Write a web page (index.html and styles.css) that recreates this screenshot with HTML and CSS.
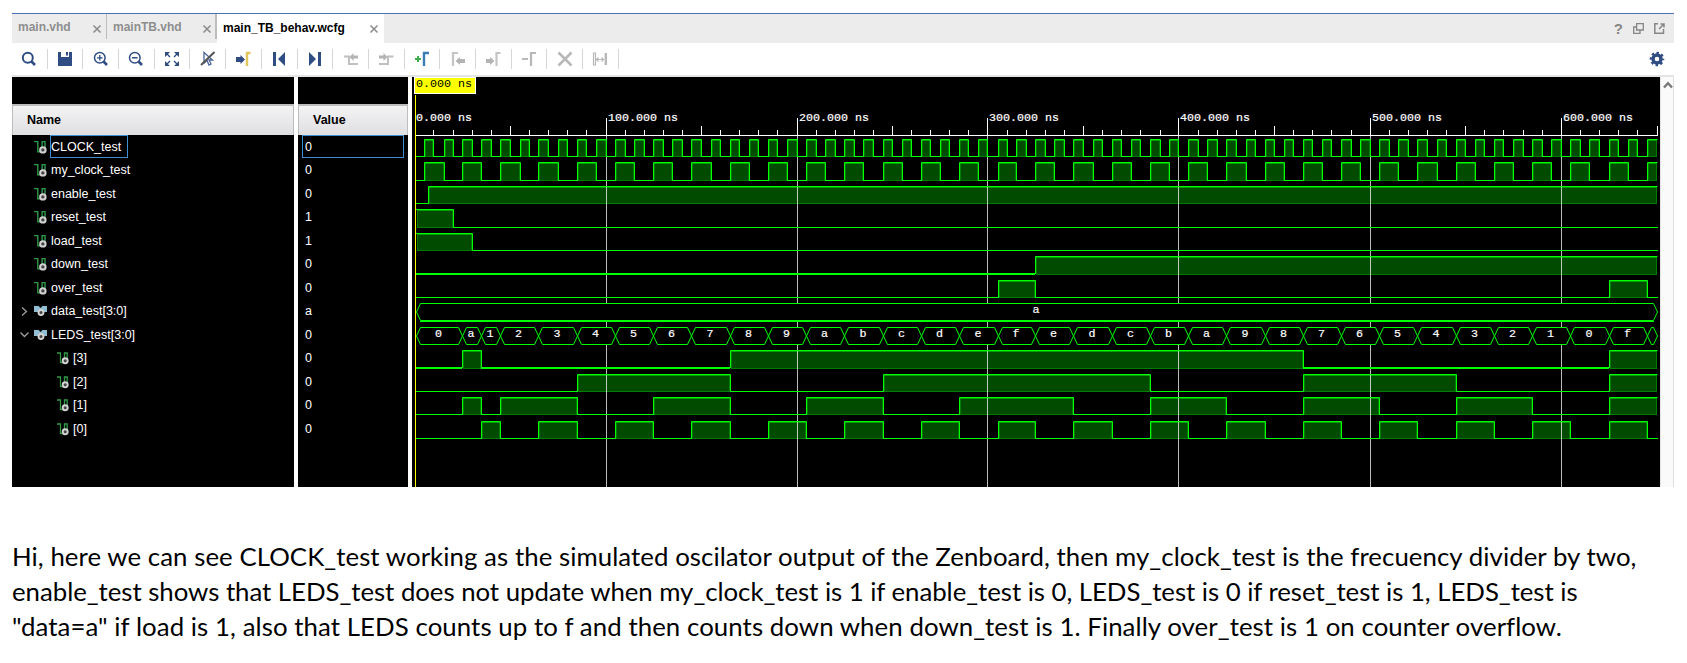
FILE: index.html
```html
<!DOCTYPE html>
<html lang="en">
<head>
<meta charset="utf-8">
<title>main_TB_behav.wcfg</title>
<link rel="stylesheet" href="styles.css">
</head>
<body>
<svg class="defs" width="0" height="0">
  <symbol id="sig" viewBox="0 0 12 13">
    <path d="M0 1.5H3.5V11H6.5M7.5 8V1.500H10.200V7" fill="none" stroke="#2f9a48" stroke-width="1.300"/>
    <circle cx="8.200" cy="9.200" r="2.500" fill="#444" stroke="#d2d2d2" stroke-width="1.900"/>
  </symbol>
  <symbol id="bus" viewBox="0 0 13 12">
    <path d="M0 1H4.500L6.500 3L8.500 1H13V7H0Z" fill="#8fbdd3"/>
    <circle cx="7" cy="7.500" r="2.500" fill="#444" stroke="#d2d2d2" stroke-width="1.900"/>
  </symbol>
  <symbol id="close" viewBox="0 0 10 10"><path d="M1.500 1.500L8.500 8.500M8.500 1.500L1.500 8.500" stroke="#8a8a8a" stroke-width="1.500"/></symbol>
</svg>
<main class="window">
  <header class="tabs">
    <div class="tab t1"><span>main.vhd</span><svg class="x"><use href="#close"/></svg></div>
    <div class="tab t2"><span>mainTB.vhd</span><svg class="x"><use href="#close"/></svg></div>
    <div class="tab t3"><span>main_TB_behav.wcfg</span><svg class="x"><use href="#close"/></svg></div>
    <div class="winctl">
      <span class="help">?</span>
      <svg width="11" height="11" viewBox="0 0 11 11" fill="none" stroke="#868686" stroke-width="1.300"><path d="M3.600 .7H10.300V7H3.600ZM3.600 4H.7V10.300H7V7"/></svg>
      <svg width="11" height="11" viewBox="0 0 11 11" fill="none" stroke="#868686" stroke-width="1.500"><path d="M4 .8H.8V10.200H9.500V6M5 6L9.500 1.500M6.500 1H10V4.500"/></svg>
    </div>
  </header>
  <nav class="toolbar">
    <div class="tool"><svg viewBox="0 0 16 16"><circle cx="6.800" cy="6.800" r="5" fill="none" stroke="#2f4d82" stroke-width="2"/><path d="M10.500 10.500L14 14" stroke="#2f4d82" stroke-width="2.600"/></svg></div>
    <div class="tool"><svg viewBox="0 0 16 16"><path d="M1 1H4V6H12V1H15V15H1ZM9 1H11V4.500H9Z" fill="#2f4d82"/></svg></div>
    <div class="tool"><svg viewBox="0 0 16 16"><circle cx="6.800" cy="6.800" r="5.300" fill="none" stroke="#2f4d82" stroke-width="1.500"/><path d="M4 6.800H9.600M6.800 4V9.600" stroke="#2f4d82" stroke-width="1.300"/><path d="M10.500 10.500L14 14" stroke="#2f4d82" stroke-width="2.600"/></svg></div>
    <div class="tool"><svg viewBox="0 0 16 16"><circle cx="6.800" cy="6.800" r="5.300" fill="none" stroke="#2f4d82" stroke-width="1.500"/><path d="M4 6.800H9.600" stroke="#2f4d82" stroke-width="1.500"/><path d="M10.500 10.500L14 14" stroke="#2f4d82" stroke-width="2.600"/></svg></div>
    <div class="tool"><svg viewBox="0 0 16 16"><path d="M1 1H6L1 6ZM15 1H10L15 6ZM1 15H6L1 10ZM15 15H10L15 10Z" fill="#2f4d82"/><path d="M3 3L6 6M13 3L10 6M3 13L6 10M13 13L10 10" stroke="#2f4d82" stroke-width="1.400"/></svg></div>
    <div class="tool"><svg viewBox="0 0 16 16"><path d="M4 1.500V12L7 9.500L9 14L11 13L9 9H12.500Z" fill="none" stroke="#4a669a" stroke-width="1.300"/><path d="M1 14L14.500 1" stroke="#555" stroke-width="2"/></svg></div>
    <div class="tool"><svg viewBox="0 0 16 16"><path d="M1 6H5.500V4L10 8.500L5.500 13V11H1Z" fill="#2f4d82"/><path d="M15.500 2H12V15" fill="none" stroke="#e2c65c" stroke-width="2.400"/></svg></div>
    <div class="tool"><svg viewBox="0 0 16 16"><path d="M2 1H5V15H2ZM14 1V15L7 8Z" fill="#2f4d82"/></svg></div>
    <div class="tool"><svg viewBox="0 0 16 16"><path d="M11 1H14V15H11ZM2 1V15L9 8Z" fill="#2f4d82"/></svg></div>
    <div class="tool"><svg viewBox="0 0 16 16"><path d="M1 5.500H6V13H15" fill="none" stroke="#c0c0c0" stroke-width="2"/><path d="M6.500 6L10.500 2V4.500H15V7.500H10.500V10Z" fill="#b4b4b4"/></svg></div>
    <div class="tool"><svg viewBox="0 0 16 16"><path d="M1 13H10V5.500H15.500" fill="none" stroke="#c0c0c0" stroke-width="2"/><path d="M9.500 6L5.500 2V4.500H1V7.500H5.500V10Z" fill="#b4b4b4"/></svg></div>
    <div class="tool"><svg viewBox="0 0 16 16"><path d="M1 8H7M4 5V11" stroke="#3dae49" stroke-width="2"/><path d="M15 2H10V15" fill="none" stroke="#3a7cb4" stroke-width="2.400"/></svg></div>
    <div class="tool"><svg viewBox="0 0 16 16"><path d="M8 2H3V15" fill="none" stroke="#c4c4c4" stroke-width="2.200"/><path d="M5.500 10L10 6V8H15V12H10V14Z" fill="#b4b4b4"/></svg></div>
    <div class="tool"><svg viewBox="0 0 16 16"><path d="M15.500 2H11.500V15" fill="none" stroke="#c4c4c4" stroke-width="2.200"/><path d="M9.500 10L5 6V8H1V12H5V14Z" fill="#b4b4b4"/></svg></div>
    <div class="tool"><svg viewBox="0 0 16 16"><path d="M1 8H7M15 2H10V15" fill="none" stroke="#b8b8b8" stroke-width="2.200"/></svg></div>
    <div class="tool"><svg viewBox="0 0 16 16"><path d="M1.500 1.500L14.500 14.500M14.500 1.500L1.500 14.500" stroke="#b8b8b8" stroke-width="2.600"/></svg></div>
    <div class="tool"><svg viewBox="0 0 16 16"><path d="M1.500 2V14H3.500V2ZM4 8.500H12M6.500 6.500L4.500 8.500L6.500 10.500M9.500 6.500L11.500 8.500L9.500 10.500" fill="none" stroke="#b8b8b8" stroke-width="1.200"/><path d="M13.800 2V14" stroke="#b8b8b8" stroke-width="2.400"/></svg></div>
    <svg class="gear" viewBox="0 0 16 16"><circle cx="8" cy="8" r="4" fill="none" stroke="#2f4d82" stroke-width="3.400"/><circle cx="8" cy="8" r="6.200" fill="none" stroke="#2f4d82" stroke-width="2.200" stroke-dasharray="2.430 2.430" stroke-dashoffset="1.215"/></svg>
  </nav>
  <section class="viewer">
    <div class="col names">
      <div class="gap"></div>
      <div class="head">Name</div>
      <div class="row"><svg class="ic"><use href="#sig"/></svg><span class="sel">CLOCK_test</span></div>
      <div class="row"><svg class="ic"><use href="#sig"/></svg><span>my_clock_test</span></div>
      <div class="row"><svg class="ic"><use href="#sig"/></svg><span>enable_test</span></div>
      <div class="row"><svg class="ic"><use href="#sig"/></svg><span>reset_test</span></div>
      <div class="row"><svg class="ic"><use href="#sig"/></svg><span>load_test</span></div>
      <div class="row"><svg class="ic"><use href="#sig"/></svg><span>down_test</span></div>
      <div class="row"><svg class="ic"><use href="#sig"/></svg><span>over_test</span></div>
      <div class="row group"><svg class="arrow" viewBox="0 0 9 9"><path d="M2 .5L6.500 4.500L2 8.500"/></svg><svg class="ic"><use href="#bus"/></svg><span>data_test[3:0]</span></div>
      <div class="row group"><svg class="arrow" viewBox="0 0 9 9"><path d="M.5 2.500L4.500 6.500L8.500 2.500"/></svg><svg class="ic"><use href="#bus"/></svg><span>LEDS_test[3:0]</span></div>
      <div class="row bit"><svg class="ic"><use href="#sig"/></svg><span>[3]</span></div>
      <div class="row bit"><svg class="ic"><use href="#sig"/></svg><span>[2]</span></div>
      <div class="row bit"><svg class="ic"><use href="#sig"/></svg><span>[1]</span></div>
      <div class="row bit"><svg class="ic"><use href="#sig"/></svg><span>[0]</span></div>
    </div>
    <div class="col values">
      <div class="gap"></div>
      <div class="head">Value</div>
      <div class="row"><span class="sel">0</span></div>
      <div class="row"><span>0</span></div>
      <div class="row"><span>0</span></div>
      <div class="row"><span>1</span></div>
      <div class="row"><span>1</span></div>
      <div class="row"><span>0</span></div>
      <div class="row"><span>0</span></div>
      <div class="row"><span>a</span></div>
      <div class="row"><span>0</span></div>
      <div class="row"><span>0</span></div>
      <div class="row"><span>0</span></div>
      <div class="row"><span>0</span></div>
      <div class="row"><span>0</span></div>
    </div>
    <svg class="wave" id="wave" width="1248" height="410" viewBox="412 77 1248 410"></svg>
    <div class="scroll"><svg width="10" height="8" viewBox="0 0 10 8"><path d="M1 6.500L5 2.200L9 6.500" fill="none" stroke="#777" stroke-width="2.400"/></svg></div>
  </section>
</main>
<p class="note"><span class="l1">Hi, here we can see CLOCK_test working as the simulated oscilator output of the Zenboard, then my_clock_test is the frecuency divider by two,</span><br><span class="l2">enable_test shows that LEDS_test does not update when my_clock_test is 1 if enable_test is 0, LEDS_test is 0 if reset_test is 1, LEDS_test is</span><br><span class="l3">"data=a" if load is 1, also that LEDS counts up to f and then counts down when down_test is 1. Finally over_test is 1 on counter overflow.</span></p>
<script src="wave.js"></script>
</body>
</html>
```
FILE: styles.css
```css
* { box-sizing: border-box; }
body { margin: 0; background: #fff; font-family: "Liberation Sans", Arial, sans-serif; font-size: 12.500px; overflow: hidden; }
.defs { display: block; height: 0; }
.window { width: 1662px; margin: 13px 0 0 12px; }
.tabs { display: flex; height: 30px; border-top: 1px solid #4a72b5; background: #ececec; font-weight: bold; font-size: 12px; }
.tab { display: flex; align-items: center; justify-content: space-between; padding: 0 5px 2px 6px; color: #8e8e8e; white-space: nowrap; }
.t1 { width: 95px; height: 25px; border-right: 1px solid #bdbdbd; padding: 1px 4px 0 6px; }
.t2 { width: 110px; height: 25px; border-right: 2px solid #bdbdbd; padding: 1px 3px 0 6px; }
.t3 { width: 167px; background: #fff; color: #000; }
.tab.t3 { padding-bottom: 2px; }
.x { width: 10px; height: 10px; margin-top: 3px; }
.winctl { margin-left: auto; display: flex; align-items: center; gap: 10px; padding-right: 9px; padding-bottom: 1px; }
.help { color: #868686; font-size: 15px; line-height: 15px; }
.toolbar { display: flex; align-items: center; height: 34px; border-bottom: 2px solid #e4e4e4; }
.tool { width: 35.700px; height: 20px; display: flex; align-items: center; justify-content: center; border-right: 1px solid #d6d6d6; flex: none; }
.tool svg { width: 16px; height: 16px; }
.gear { width: 16px; height: 16px; margin-left: auto; margin-right: 9px; }
.viewer { display: flex; height: 410px; }
.col { background: #000; color: #fff; margin-right: 4px; }
.names { width: 282px; }
.values { width: 110px; }
.gap { height: 27px; }
.head { height: 31px; padding: 1px 0 0 14px; background: linear-gradient(#f3f3f4, #dfdfe2); border: 1px solid #bdbdbd; border-top-width: 2px; border-bottom: 0; color: #000; font-weight: bold; font-size: 12.500px; line-height: 27px; }
.row { height: 23.520px; display: flex; align-items: center; padding-left: 22px; white-space: nowrap; }
.row span { padding-left: 4px; }
.row .sel { border: 1px solid #3f8fd0; height: 23px; line-height: 22px; margin-left: 3px; width: 78px; padding-left: 0; }
.ic { width: 13px; height: 14px; }
.sel { flex: none; }
.group { padding-left: 8px; }
.arrow { width: 9px; height: 9px; margin-right: 5px; fill: none; stroke: #a0a0a0; stroke-width: 1.300; }
.bit { padding-left: 45px; }
.bit .ic { width: 12px; }
.values .row { padding-left: 4px; }
.values .row span { padding-left: 3px; }
.values .row .sel { margin: 0; width: 102px; padding-left: 2px; }
.wave { flex: none; background: #000; font-family: "Liberation Mono", "Courier New", monospace; font-size: 11.670px; }
.scroll { width: 14px; background: #fafafa; border-right: 1px solid #e0e0e0; border-left: 1px solid #e4e4e4; padding: 1px 0 0 2px; }
.grid { fill: #fff; fill-opacity: .73; }
.axis { fill: #fff; }
.lbl { fill: #fff; stroke: #fff; stroke-width: .2; }
.fill { fill: #004b00; stroke: #007d00; stroke-width: 1; }
.glow { fill: #00a000; }
.line { fill: none; stroke: #0f0; stroke-width: 1; }
.bus { fill: #000; stroke: #0f0; stroke-width: 1; }
.cursor { fill: #ff0; }
.note { margin: 52px 0 0 12px; font-family: Lato, "Noto Sans", sans-serif; font-size: 25.800px; line-height: 35px; color: #000; white-space: nowrap; font-variant-ligatures: none; }
.l1 { letter-spacing: .061px; }
.l2 { letter-spacing: -.039px; }
.l3 { letter-spacing: .068px; }
```
FILE: wave.js
```js
const END = 650;
// columns where the time axis is snapped one pixel aside
const SNAP = { 10: 433, 15: 444, 65: 538, 300: 987, 305: 998, 345: 1073, 400: 1178, 650: 1657 };
const X = t => SNAP[t] || Math.floor(414.95 + 1.9105 * t);
const out = { fills: '', grid: '', lines: '', text: '' };

const pulses = (first, width, period) => {
  const list = [];
  for (let t = first; t < END; t += period) list.push([t, Math.min(END, t + width)]);
  return list;
};

const leds = [[0, 0], [25, 10], [35, 1]];
for (let v = 2, t = 45; v <= 15; v++, t += 20) leds.push([t, v]);
for (let v = 14, t = 325; v >= 0; v--, t += 20) leds.push([t, v]);
leds.push([625, 15], [645, 14]);

const bit = n => {
  const list = [];
  leds.forEach(([t, v], i) => {
    const end = i + 1 < leds.length ? leds[i + 1][0] : END;
    if (!(v >> n & 1)) return;
    const last = list[list.length - 1];
    if (last && last[1] === t) last[1] = end; else list.push([t, end]);
  });
  return list;
};

// high intervals, top row, base row, base thickness
const signals = [
  [pulses(5, 5, 10), 139, 156, 1],
  [pulses(5, 10, 20), 162, 180, 1],
  [[[7, END]], 186, 203, 1],
  [[[0, 20]], 209, 227, 1],
  [[[0, 30]], 233, 250, 1],
  [[[325, END]], 256, 273, 2],
  [[[305, 325], [625, 645]], 280, 297, 1],
  [bit(3), 350, 367, 2],
  [bit(2), 374, 391, 1],
  [bit(1), 397, 414, 1],
  [bit(0), 421, 438, 1]
];

for (const [highs, top, base, thick] of signals) {
  let pos = 416;
  const low = (a, b) => { out.lines += `<rect x="${a}" y="${base}" width="${b - a}" height="${thick}" fill="#0f0"/>`; };
  for (const [a, b] of highs) {
    const xa = a === 0 ? 416 : X(a), xb = X(b);
    const bottom = base + thick - 1;
    if (xa > pos) low(pos, xa);
    out.fills += `<rect class="fill" x="${xa + 1.5}" y="${top + 1.5}" width="${xb - xa - 2}" height="${bottom - top - 1}"/>`;
    out.fills += `<rect class="glow" x="${xa + 1}" y="${top + 1}" width="${xb - xa - 1}" height="1"/>`;
    const start = a === 0 ? `M${xa} ${top + .5}` : `M${xa + .5} ${base + 1}V${top + .5}`;
    out.lines += `<path class="line" d="${start}H${xb + .5}${b === END ? '' : `V${base + 1}`}"/>`;
    pos = b === END ? 1658 : xb;
  }
  if (pos < 1658) low(pos, 1658);
}

const hex = (a, b, top, base, label, dy) => {
  const m = (top + base) / 2 + .5, s = Math.min(4, (b - a) / 2);
  out.lines += `<path class="bus" d="M${a + .5} ${m}L${a + s + .5} ${top + .5}H${b - s + .5}L${b + .5} ${m}L${b - s + .5} ${base + .5}H${a + s + .5}Z"/>`;
  if (label) out.text += `<text class="lbl" text-anchor="middle" x="${(a + b) / 2 - .5}" y="${dy}">${label}</text>`;
};
hex(416, 1657, 303, 320, 'a', 313);
out.lines += '<rect x="420" y="321" width="1234" height="1" fill="#0f0"/>';
leds.forEach(([t, v], i) => {
  const end = i + 1 < leds.length ? leds[i + 1][0] : END;
  hex(t ? X(t) : 416, X(end), 327, 344, t < 645 ? v.toString(16) : '', 337);
});

out.grid += '<rect class="axis" x="416" y="135" width="1242" height="1"/>';
for (let t = 10; t <= END; t += 10) {
  const h = t % 100 === 0 ? 17 : t % 50 === 0 ? 9 : 5;
  out.grid += `<rect class="axis" x="${X(t)}" y="${135 - h}" width="1" height="${h}"/>`;
  if (t % 100 === 0) out.grid += `<rect class="grid" x="${X(t)}" y="136" width="1" height="351"/>`;
}
for (let t = 0; t <= 600; t += 100) {
  out.text += `<text class="lbl" x="${X(t) + 2}" y="121">${t}.000 ns</text>`;
}
out.text += '<rect class="cursor" x="415" y="95" width="1" height="392"/>';
out.text += '<rect x="414" y="77" width="62" height="17" fill="#fff"/><rect class="cursor" x="415" y="78" width="60" height="15"/>';
out.text += '<text x="416" y="87">0.000 ns</text>';

document.getElementById('wave').innerHTML = out.fills + out.grid + out.lines + out.text;
```
